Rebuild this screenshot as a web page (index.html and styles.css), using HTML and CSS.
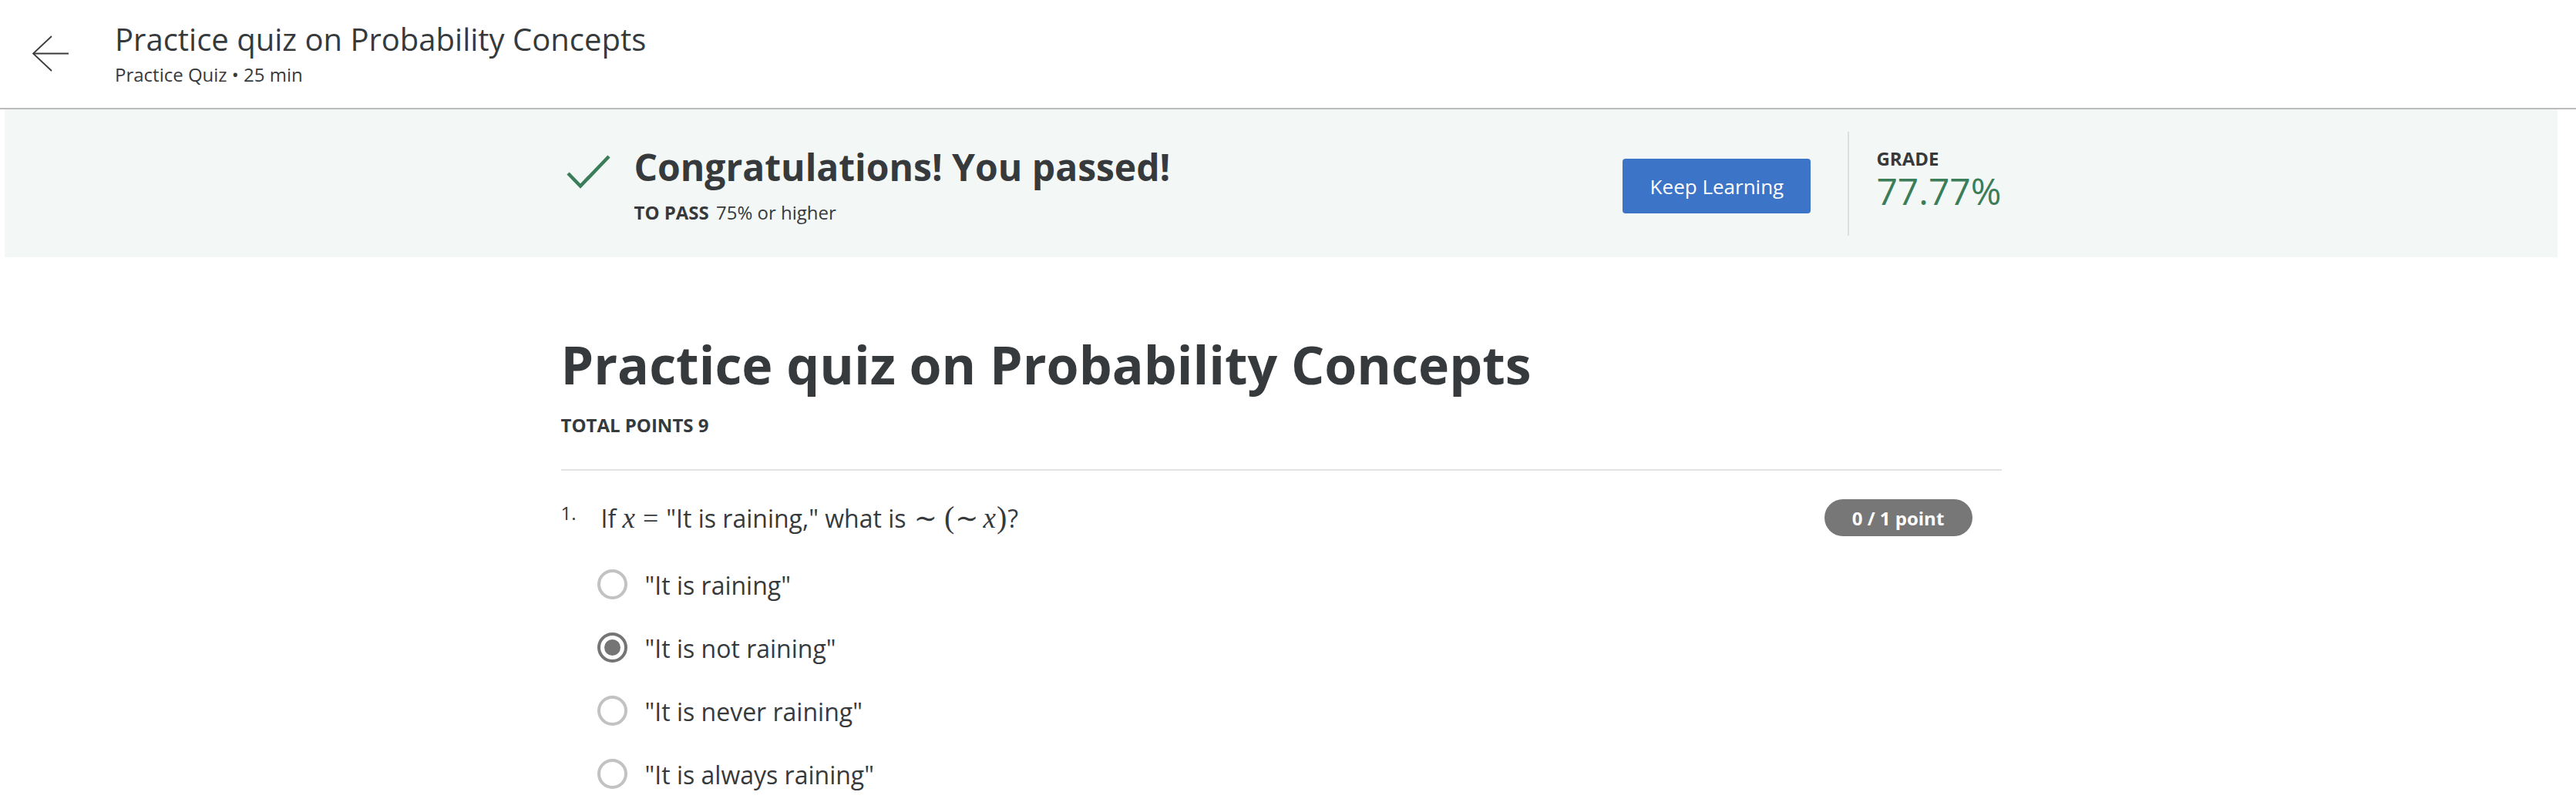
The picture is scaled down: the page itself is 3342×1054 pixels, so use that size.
FILE: index.html
```html
<!DOCTYPE html>
<html lang="en">
<head>
<meta charset="utf-8">
<title>Practice quiz on Probability Concepts</title>
<link rel="stylesheet" href="styles.css">
</head>
<body>
<header class="topbar">
  <a class="back" aria-label="Back">
    <svg width="48" height="48" viewBox="0 0 48 48" fill="none" stroke="#3a3a3c" stroke-width="1.8">
      <path d="M1 23.5 H47" />
      <path d="M25 1 L1 23.5 L25 46" />
    </svg>
  </a>
  <div class="titles">
    <div class="title">Practice quiz on Probability Concepts</div>
    <div class="subtitle">Practice Quiz • 25 min</div>
  </div>
</header>

<div class="page">
  <section class="result">
    <div class="container result-inner">
      <div class="result-left">
        <svg class="check" width="60" height="48" viewBox="0 0 60 48" fill="none" stroke="#3a7d58" stroke-width="4.5">
          <path d="M4 25 L20 41.5 L57 3" />
        </svg>
        <div class="result-text">
          <h2 class="result-title">Congratulations! You passed!</h2>
          <p class="result-pass"><span class="label">TO PASS</span> 75% or higher</p>
        </div>
      </div>
      <div class="result-right">
        <button class="btn-primary" type="button">Keep Learning</button>
        <div class="vr"></div>
        <div class="grade">
          <div class="label grade-label">GRADE</div>
          <div class="grade-value">77.77%</div>
        </div>
      </div>
    </div>
  </section>

  <main class="container quiz">
    <h1 class="quiz-title">Practice quiz on Probability Concepts</h1>
    <div class="total label">TOTAL POINTS 9</div>
    <div class="rule"></div>

    <div class="question">
      <div class="qnum">1.</div>
      <div class="qtext">If <span class="mi">x</span><span class="mo">=</span>"It is raining," what is <span class="mo tilde">∼</span><span class="mo paren">(</span><span class="mo tilde2">∼</span><span class="mi">x</span><span class="mo paren">)</span>?</div>
      <div class="badge">0 / 1 point</div>
    </div>

    <div class="options">
      <div class="option"><span class="radio"></span><span class="opt-label">"It is raining"</span></div>
      <div class="option"><span class="radio checked"></span><span class="opt-label">"It is not raining"</span></div>
      <div class="option"><span class="radio"></span><span class="opt-label">"It is never raining"</span></div>
      <div class="option"><span class="radio"></span><span class="opt-label">"It is always raining"</span></div>
    </div>
  </main>
</div>
</body>
</html>
```

FILE: styles.css
```css
* { box-sizing: border-box; }

html, body {
  margin: 0;
  padding: 0;
  background: #ffffff;
}

body {
  font-family: "Open Sans", "DejaVu Sans", sans-serif;
  color: #373a3c;
}

/* ---------- top bar ---------- */
.topbar {
  height: 142px;
  display: flex;
  align-items: center;
  padding-left: 42px;
  border-bottom: 2px solid #bbbbbb;
}

.back {
  display: flex;
  width: 48px;
  height: 48px;
  margin-right: 59px;
}

.titles {
  display: flex;
  flex-direction: column;
  margin-top: -1px;
}

.title {
  font-size: 40px;
  line-height: 48px;
  font-weight: 400;
  color: #373a3c;
}

.subtitle {
  font-size: 24px;
  line-height: 32px;
  margin-top: 6px;
  color: #373a3c;
}

/* ---------- page wrapper ---------- */
.page {
  margin: 0 24px 0 6px;
}

.container {
  width: 1869px;
  margin: 0 auto;
}

/* ---------- result banner ---------- */
.result {
  background: #f3f8f6;
  height: 192px;
}

.result-inner {
  height: 100%;
  display: flex;
  align-items: center;
  justify-content: space-between;
}

.result-left {
  display: flex;
  align-items: flex-start;
  padding-top: 4px;
}

.check {
  margin-left: 5px;
  margin-right: 30px;
  margin-top: 11px;
}

.result-title {
  margin: 0;
  font-size: 48px;
  line-height: 56px;
  font-weight: 700;
  color: #373a3c;
}

.result-pass {
  margin: 15px 0 0 0;
  font-size: 24px;
  line-height: 32px;
}

.label {
  font-weight: 700;
}

.result-pass .label {
  margin-right: 3px;
}

.result-right {
  display: flex;
  align-items: center;
  height: 100%;
}

.btn-primary {
  width: 244px;
  height: 71px;
  margin-top: 7px;
  border: none;
  border-radius: 4px;
  background: #3c74c7;
  color: #ffffff;
  font-family: "Open Sans", sans-serif;
  font-size: 26px;
  font-weight: 400;
  padding: 0;
}

.vr {
  width: 2px;
  height: 135px;
  background: #dcdfde;
  margin-left: 48px;
  margin-right: 35px;
}

.grade {
  display: flex;
  flex-direction: column;
  margin-bottom: 11px;
}

.grade-label {
  font-size: 24px;
  line-height: 30px;
}

.grade-value {
  font-size: 48px;
  line-height: 54px;
  font-weight: 400;
  color: #3a7d58;
}

/* ---------- quiz ---------- */
.quiz {
  padding-top: 99px;
}

.quiz-title {
  margin: 0;
  font-size: 68px;
  line-height: 80px;
  font-weight: 700;
  color: #373a3c;
}

.total {
  margin-top: 25px;
  font-size: 24px;
  line-height: 28px;
}

.rule {
  margin-top: 43px;
  height: 2px;
  background: #e4e4e4;
}

.question {
  margin-top: 37px;
  display: flex;
  align-items: flex-start;
}

.qnum {
  width: 52px;
  flex: none;
  font-size: 24px;
  line-height: 36px;
}

.qtext {
  flex: 1;
  font-size: 32px;
  line-height: 48px;
}

.mi {
  font-family: "Liberation Serif", "DejaVu Serif", serif;
  font-style: italic;
  font-size: 37px;
}

.mo {
  font-family: "Liberation Serif", "DejaVu Serif", serif;
  font-size: 36px;
  margin: 0 10px;
}

.mo.tilde {
  margin: 0 8px 0 2px;
}

.mo.tilde2 {
  margin: 0 6px 0 0;
}

.mo.paren {
  margin: 0 1px;
  font-size: 40px;
}

.badge {
  flex: none;
  width: 192px;
  height: 48px;
  margin-right: 38px;
  border-radius: 24px;
  background: #777777;
  color: #ffffff;
  font-size: 24px;
  font-weight: 700;
  display: flex;
  align-items: center;
  justify-content: center;
}

.options {
  margin-top: 20px;
  padding-left: 47px;
}

.option {
  height: 82px;
  display: flex;
  align-items: center;
}

.radio {
  flex: none;
  width: 39px;
  height: 39px;
  border: 4px solid #c2c2c2;
  border-radius: 50%;
  margin-right: 23px;
  display: flex;
  align-items: center;
  justify-content: center;
}

.radio.checked {
  border-color: #757575;
}

.radio.checked::after {
  content: "";
  width: 21px;
  height: 21px;
  border-radius: 50%;
  background: #757575;
}

.opt-label {
  font-size: 32px;
  line-height: 48px;
  margin-top: 4px;
}
```
